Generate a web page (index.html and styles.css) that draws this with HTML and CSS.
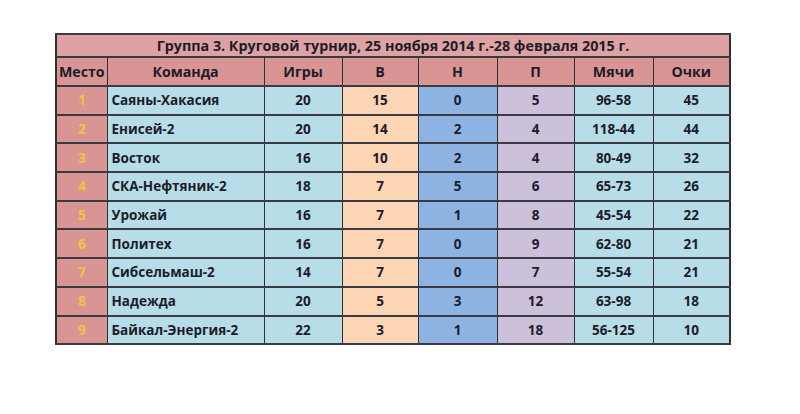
FILE: index.html
```html
<!DOCTYPE html>
<html lang="ru">
<head>
<meta charset="utf-8">
<title>Группа 3</title>
<link rel="stylesheet" href="styles.css">
</head>
<body>
<table class="standings">
  <colgroup>
    <col class="c-place"><col class="c-team"><col class="c-games"><col class="c-w">
    <col class="c-d"><col class="c-l"><col class="c-balls"><col class="c-pts">
  </colgroup>
  <thead>
    <tr class="title-row"><th colspan="8">Группа 3. Круговой турнир, 25 ноября 2014 г.-28 февраля 2015 г.</th></tr>
    <tr class="head-row">
      <th>Место</th><th>Команда</th><th>Игры</th><th>В</th><th>Н</th><th>П</th><th>Мячи</th><th>Очки</th>
    </tr>
  </thead>
  <tbody>
    <tr><td class="place">1</td><td class="team">Саяны-Хакасия</td><td class="games">20</td><td class="w">15</td><td class="d">0</td><td class="l">5</td><td class="balls">96-58</td><td class="pts">45</td></tr>
    <tr><td class="place">2</td><td class="team">Енисей-2</td><td class="games">20</td><td class="w">14</td><td class="d">2</td><td class="l">4</td><td class="balls">118-44</td><td class="pts">44</td></tr>
    <tr><td class="place">3</td><td class="team">Восток</td><td class="games">16</td><td class="w">10</td><td class="d">2</td><td class="l">4</td><td class="balls">80-49</td><td class="pts">32</td></tr>
    <tr><td class="place">4</td><td class="team">СКА-Нефтяник-2</td><td class="games">18</td><td class="w">7</td><td class="d">5</td><td class="l">6</td><td class="balls">65-73</td><td class="pts">26</td></tr>
    <tr><td class="place">5</td><td class="team">Урожай</td><td class="games">16</td><td class="w">7</td><td class="d">1</td><td class="l">8</td><td class="balls">45-54</td><td class="pts">22</td></tr>
    <tr><td class="place">6</td><td class="team">Политех</td><td class="games">16</td><td class="w">7</td><td class="d">0</td><td class="l">9</td><td class="balls">62-80</td><td class="pts">21</td></tr>
    <tr><td class="place">7</td><td class="team">Сибсельмаш-2</td><td class="games">14</td><td class="w">7</td><td class="d">0</td><td class="l">7</td><td class="balls">55-54</td><td class="pts">21</td></tr>
    <tr><td class="place">8</td><td class="team">Надежда</td><td class="games">20</td><td class="w">5</td><td class="d">3</td><td class="l">12</td><td class="balls">63-98</td><td class="pts">18</td></tr>
    <tr><td class="place">9</td><td class="team">Байкал-Энергия-2</td><td class="games">22</td><td class="w">3</td><td class="d">1</td><td class="l">18</td><td class="balls">56-125</td><td class="pts">10</td></tr>
  </tbody>
</table>
</body>
</html>
```
FILE: styles.css
```css
html, body {
  margin: 0;
  background: #ffffff;
}
body {
  padding: 33px 0 0 55px;
  font-family: "Open Sans", "Lato", "DejaVu Sans", sans-serif;
  font-weight: 700;
  font-size: 13.5px;
  color: #1c1c2a;
}
.standings {
  border-collapse: collapse;
  table-layout: fixed;
  width: 674px;
  border: 2px solid #2f2f38;
}
.c-place { width: 51px; }
.c-team { width: 157px; }
.c-games { width: 78px; }
.c-w { width: 76px; }
.c-d { width: 79px; }
.c-l { width: 77px; }
.c-balls { width: 79px; }
.c-pts { width: 77px; }

.standings th,
.standings td {
  padding: 0;
  text-align: center;
  border-left: 1px solid #2f2f38;
  border-right: 1px solid #2f2f38;
  border-top: 2px solid #3a3a44;
  border-bottom: 2px solid #3a3a44;
  white-space: nowrap;
  overflow: hidden;
}
.title-row th {
  height: 21px;
  background: #dfa2a2;
  font-weight: 700;
  font-size: 14.3px;
}
.head-row th {
  height: 27px;
  background: #d99594;
  font-weight: 700;
  font-size: 14.2px;
}
.standings td {
  height: 26.7px;
}
.place {
  background: #d99594;
  color: #f7c23a;
}
.team {
  background: #b7dde8;
  text-align: left !important;
  padding-left: 4px !important;
}
.games { background: #b7dde8; }
.w { background: #fcd5b4; }
.d { background: #8db3e2; }
.l { background: #ccc0da; }
.balls { background: #b7dee8; }
.pts { background: #b7dee8; }
```
